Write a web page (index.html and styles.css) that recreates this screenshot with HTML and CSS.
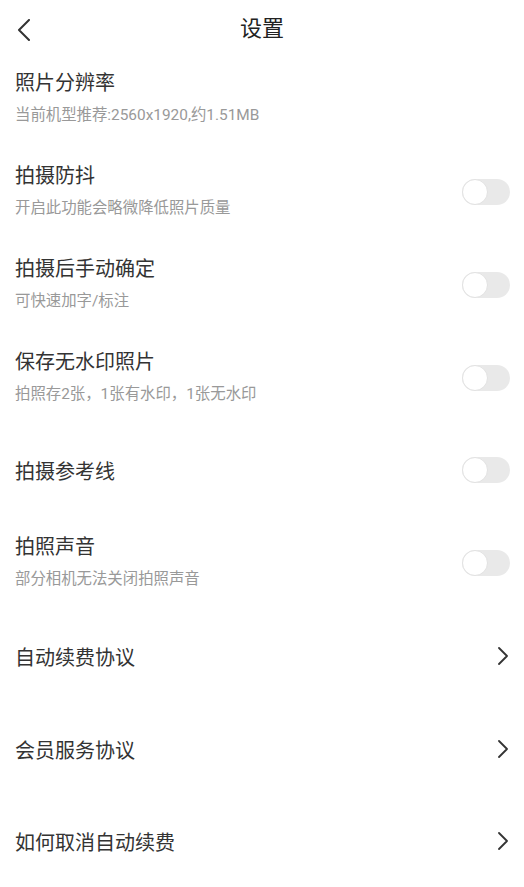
FILE: index.html
```html
<!DOCTYPE html>
<html lang="zh-CN">
<head>
<meta charset="utf-8">
<meta name="viewport" content="width=device-width, initial-scale=1">
<title>设置</title>
<link rel="stylesheet" href="styles.css">
</head>
<body>
<div class="page">
	<div class="topbar">
		<svg class="back" width="14" height="22" viewBox="0 0 14 22"><path d="M12 1 L2 11 L12 21" fill="none" stroke="#333" stroke-width="2" stroke-linecap="round" stroke-linejoin="round"/></svg>
		<div class="title">设置</div>
	</div>

	<div class="row">
		<div class="txt">
			<div class="name">照片分辨率</div>
			<div class="desc">当前机型推荐:2560x1920,约1.51MB</div>
		</div>
	</div>

	<div class="row">
		<div class="txt">
			<div class="name">拍摄防抖</div>
			<div class="desc">开启此功能会略微降低照片质量</div>
		</div>
		<div class="sw"><span class="knob"></span></div>
	</div>

	<div class="row">
		<div class="txt">
			<div class="name">拍摄后手动确定</div>
			<div class="desc">可快速加字/标注</div>
		</div>
		<div class="sw"><span class="knob"></span></div>
	</div>

	<div class="row">
		<div class="txt">
			<div class="name">保存无水印照片</div>
			<div class="desc">拍照存2张，1张有水印，1张无水印</div>
		</div>
		<div class="sw"><span class="knob"></span></div>
	</div>

	<div class="row single">
		<div class="txt">
			<div class="name">拍摄参考线</div>
		</div>
		<div class="sw"><span class="knob"></span></div>
	</div>

	<div class="row">
		<div class="txt">
			<div class="name">拍照声音</div>
			<div class="desc">部分相机无法关闭拍照声音</div>
		</div>
		<div class="sw"><span class="knob"></span></div>
	</div>

	<div class="row single">
		<div class="txt"><div class="name">自动续费协议</div></div>
		<svg class="arrow" width="12" height="18" viewBox="0 0 12 18"><path d="M2 1 L10 9 L2 17" fill="none" stroke="#333" stroke-width="1.8" stroke-linecap="round" stroke-linejoin="round"/></svg>
	</div>

	<div class="row single">
		<div class="txt"><div class="name">会员服务协议</div></div>
		<svg class="arrow" width="12" height="18" viewBox="0 0 12 18"><path d="M2 1 L10 9 L2 17" fill="none" stroke="#333" stroke-width="1.8" stroke-linecap="round" stroke-linejoin="round"/></svg>
	</div>

	<div class="row single">
		<div class="txt"><div class="name">如何取消自动续费</div></div>
		<svg class="arrow" width="12" height="18" viewBox="0 0 12 18"><path d="M2 1 L10 9 L2 17" fill="none" stroke="#333" stroke-width="1.8" stroke-linecap="round" stroke-linejoin="round"/></svg>
	</div>
</div>
</body>
</html>
```

FILE: styles.css
```css
body{margin:0;background:#fff;font-family:Roboto,"Noto Sans CJK SC",sans-serif;color:#333;}
.page{width:524px;}

.topbar{height:53px;display:flex;align-items:center;justify-content:center;position:relative;padding-top:5px;box-sizing:border-box;}
.topbar .back{position:absolute;left:17px;top:19px;}
.topbar .title{font-size:22px;line-height:30px;color:#222;}

.row{height:92.75px;display:flex;align-items:center;justify-content:space-between;padding:0 14px 0 15px;box-sizing:border-box;}
.row .txt{display:flex;flex-direction:column;padding-bottom:4px;}
.row .name{font-size:20px;line-height:28px;color:#333;}
.row .desc{font-size:15.4px;line-height:20px;color:#999;margin-top:8px;}
.row.single .txt{padding:4px 0 0;}

.sw{width:48px;height:26px;border-radius:13px;background:#e9e9e9;position:relative;flex:none;}
.sw .knob{position:absolute;left:0;top:0;width:24px;height:24px;border-radius:50%;background:#fff;border:1px solid #e2e2e2;}

.arrow{flex:none;margin-right:1px;}
```
